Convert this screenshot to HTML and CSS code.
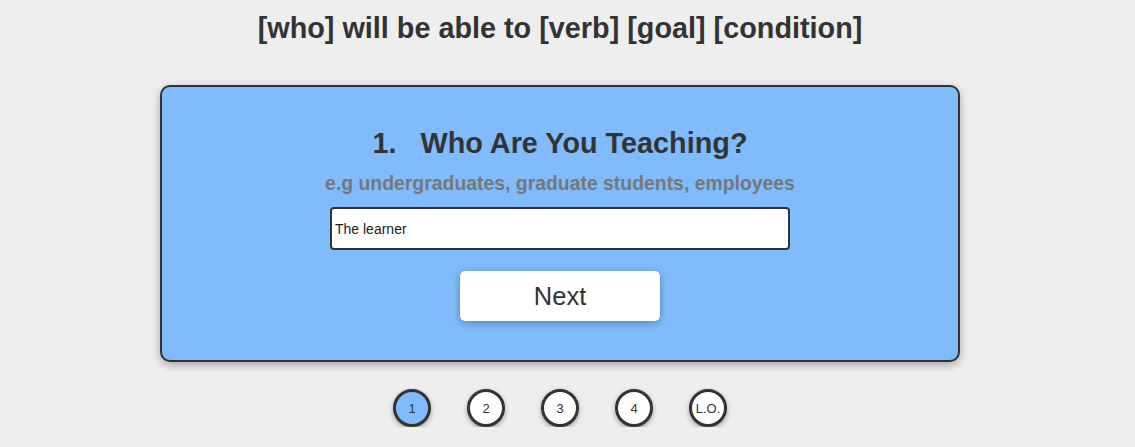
FILE: index.html
```html
<!DOCTYPE html>
<html>
<head>
<meta charset="utf-8">
<link rel="stylesheet" href="styles.css">
</head>
<body>
<div class="page">
  <h1 class="formula">[who] will be able to [verb] [goal] [condition]</h1>
  <div class="card">
    <h2 class="question"><span class="num">1.</span><span>Who Are You Teaching?</span></h2>
    <p class="hint">e.g undergraduates, graduate students, employees</p>
    <input class="field" type="text" value="The learner">
    <button class="next">Next</button>
  </div>
  <div class="steps">
    <div class="step active">1</div>
    <div class="step">2</div>
    <div class="step">3</div>
    <div class="step">4</div>
    <div class="step">L.O.</div>
  </div>
</div>
</body>
</html>
```
FILE: styles.css
```css
html, body {
  margin: 0;
  padding: 0;
  background: #eeeeee;
  font-family: "Liberation Sans", Arial, sans-serif;
  color: #333333;
}
.page {
  width: 1120px;
  display: flex;
  flex-direction: column;
  align-items: center;
}
.formula {
  margin: 11px 0 0 0;
  font-size: 28.8px;
  line-height: 34px;
  font-weight: bold;
  color: #333;
}
.card {
  margin-top: 40px;
  width: 796px;
  background: #80bcfd;
  border: 2px solid #333;
  border-radius: 10px;
  box-shadow: 0 3px 8px rgba(0,0,0,0.3);
  display: flex;
  flex-direction: column;
  align-items: center;
  padding: 39px 0 39px 0;
}
.question {
  margin: 0;
  font-size: 28.8px;
  line-height: 34px;
  font-weight: bold;
  color: #333;
  display: flex;
  gap: 24px;
}
.hint {
  margin: 12px 0 0 0;
  font-size: 19.4px;
  line-height: 22px;
  font-weight: bold;
  color: #777777;
}
.field {
  margin-top: 13px;
  box-sizing: border-box;
  width: 460px;
  height: 43px;
  border: 2px solid #333;
  border-radius: 4px;
  background: #fff;
  padding: 0 3px;
  font-family: "Liberation Sans", Arial, sans-serif;
  font-size: 14px;
  color: #222;
  outline: none;
}
.next {
  margin-top: 21px;
  width: 200px;
  height: 50px;
  border: none;
  border-radius: 5px;
  background: #fff;
  box-shadow: 0 2px 8px rgba(0,0,0,0.3);
  font-family: "Liberation Sans", Arial, sans-serif;
  font-size: 25.5px;
  color: #333;
}
.steps {
  margin-top: 27px;
  display: flex;
  gap: 36px;
}
.step {
  box-sizing: border-box;
  width: 38px;
  height: 38px;
  border: 3px solid #333;
  border-radius: 50%;
  background: #fff;
  box-shadow: 0 2px 5px rgba(0,0,0,0.35);
  display: flex;
  align-items: center;
  justify-content: center;
  font-size: 13px;
  color: #333;
}
.step.active {
  background: #80bcfd;
}
```
